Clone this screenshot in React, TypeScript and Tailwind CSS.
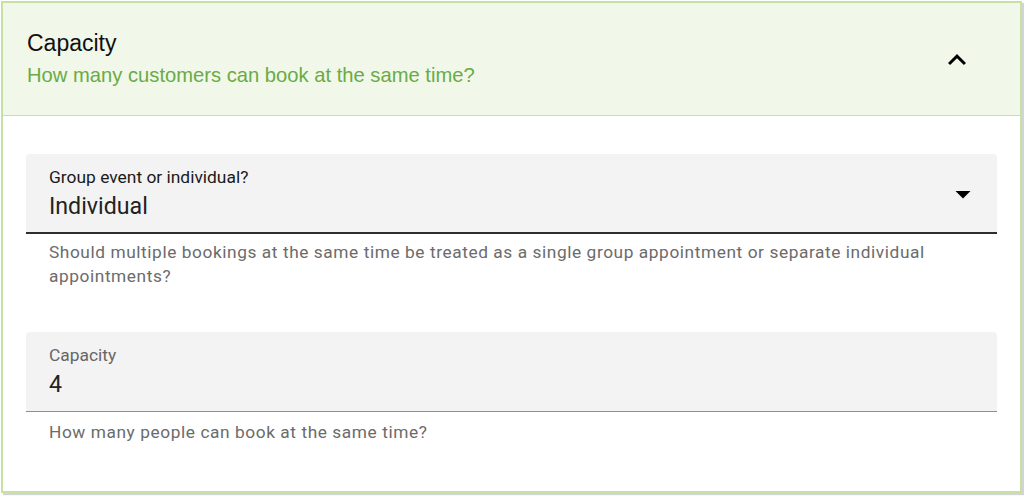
import React from "react";

const roboto = { fontFamily: "Roboto, 'Liberation Sans', sans-serif" };

export default function App() {
  return (
    <div className="w-[1024px] h-[496px] bg-white pl-[1px] pt-[1px] overflow-hidden">
      <div className="w-[1021px] h-[492px] border-2 border-[#c5e1a5] bg-white shadow-[2px_2px_1px_#d4d4d4] flex flex-col">
        <div
          className="h-[113px] bg-[#f1f8e9] border-b border-[#c5e1a5] flex items-center pl-[24px] pr-[45px]"
          style={{ fontFamily: "'Liberation Sans', Arial, sans-serif" }}
        >
          <div className="flex-1 flex flex-col">
            <div className="text-[23px] leading-[28px] text-[#111]">Capacity</div>
            <div className="text-[20.2px] leading-[28px] mt-[4px] text-[#6aab45]">
              How many customers can book at the same time?
            </div>
          </div>
          <svg width="36" height="36" viewBox="0 0 24 24" className="mt-[1px]">
            <path d="M7.41 15.41 12 10.83l4.59 4.58L18 14l-6-6-6 6z" fill="#000" />
          </svg>
        </div>
        <div className="flex flex-col pl-[23px] pr-[22px] pt-[38px]" style={roboto}>
          <div className="w-[971px]">
            <div className="h-[80px] bg-[#f3f3f3] rounded-t-[4px] border-b-2 border-[#2e2e2e] flex items-start pl-[23px] pr-[16px]">
              <div className="flex-1 flex flex-col pt-[12px]">
                <div className="text-[17.4px] leading-[22px] text-[#1a1a1a]">Group event or individual?</div>
                <div className="text-[23.2px] leading-[28px] mt-[4px] text-[#222]">Individual</div>
              </div>
              <svg width="36" height="36" viewBox="0 0 24 24" className="mt-[22px]">
                <path d="M7 10l5 5 5-5z" fill="#000" />
              </svg>
            </div>
            <div className="pl-[23px] pr-[40px] pt-[6px] text-[17.3px] leading-[24px] tracking-[0.58px] text-[#6b6b6b]">
              Should multiple bookings at the same time be treated as a single group appointment or separate individual appointments?
            </div>
          </div>
          <div className="w-[971px] mt-[44px]">
            <div className="h-[80px] bg-[#f3f3f3] rounded-t-[4px] border-b border-[#8f8f8f] flex items-start pl-[23px]">
              <div className="flex flex-col pt-[12px]">
                <div className="text-[17.4px] leading-[22px] text-[#666]">Capacity</div>
                <div className="text-[23.2px] leading-[28px] mt-[4px] text-[#222]">4</div>
              </div>
            </div>
            <div className="pl-[23px] pt-[8px] text-[17.3px] leading-[24px] tracking-[0.58px] text-[#6b6b6b]">
              How many people can book at the same time?
            </div>
          </div>
        </div>
      </div>
    </div>
  );
}
